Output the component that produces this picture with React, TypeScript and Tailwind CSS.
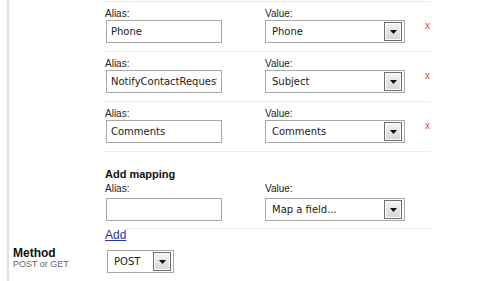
import type { ReactNode } from "react";

const FONT = "font-['Liberation_Sans',Arial,sans-serif]";
const FIELD_FONT = "font-['DejaVu_Sans',Verdana,sans-serif]";

const MAPPINGS = [
  { alias: "Phone", value: "Phone" },
  { alias: "NotifyContactRequest", value: "Subject" },
  { alias: "Comments", value: "Comments" },
];

function DropButton() {
  return (
    <div className="flex h-[19px] w-[18px] items-center justify-center border border-[#6e6e6e] bg-gradient-to-b from-[#f4f4f4] to-[#d6d6d6] shadow-[inset_0_0_0_1px_#fafafa]">
      <svg width="7" height="4" viewBox="0 0 7 4">
        <path d="M0 0h7L3.5 4z" fill="#111" />
      </svg>
    </div>
  );
}

function Select({ value, width }: { value: string; width: string }) {
  return (
    <div className={`flex h-[23px] items-center justify-between border border-[#a8a8a8] bg-white pl-[6px] pr-[2px] ${width}`}>
      <span className={`text-[10px] leading-none text-[#222] ${FIELD_FONT}`}>{value}</span>
      <DropButton />
    </div>
  );
}

function TextInput({ value }: { value: string }) {
  return (
    <input
      readOnly
      value={value}
      className={`ml-[1px] block h-[23px] w-[116px] border border-[#a8a8a8] bg-white px-[4px] text-[10px] text-[#222] outline-none ${FIELD_FONT}`}
    />
  );
}

function Label({ children }: { children: ReactNode }) {
  return <div className="h-[12px] text-[10px] leading-[12px] text-[#222]">{children}</div>;
}

function MappingRow({ alias, value }: { alias: string; value: string }) {
  return (
    <div className="flex border-t border-dotted border-[#d8d8d8] pb-[8px] pt-[6px]">
      <div className="w-[160px]">
        <Label>Alias:</Label>
        <TextInput value={alias} />
      </div>
      <div className="w-[160px]">
        <Label>Value:</Label>
        <Select value={value} width="w-[140px]" />
      </div>
      <div className="mt-[12px] text-[10px] leading-[12px] text-[#ee4035]">x</div>
    </div>
  );
}

export default function App() {
  return (
    <div className={`h-[281px] w-[499px] overflow-hidden bg-white ${FONT}`}>
      <div className="ml-[7px] h-full border-l-2 border-[#e2e2e2]">
        <div className="w-[421px] pl-[96px] pt-[1px]">
          {MAPPINGS.map((m) => (
            <MappingRow key={m.alias} alias={m.alias} value={m.value} />
          ))}
          <div className="border-t border-dotted border-[#d8d8d8] pt-[15px]">
            <div className="h-[14px] text-[11px] font-bold leading-[14px] text-[#111]">Add mapping</div>
            <div className="mt-[2px] flex pb-[6px]">
              <div className="w-[160px]">
                <Label>Alias:</Label>
                <div className="mt-[3px]">
                  <TextInput value="" />
                </div>
              </div>
              <div className="w-[160px]">
                <Label>Value:</Label>
                <div className="mt-[3px]">
                  <Select value="Map a field..." width="w-[140px]" />
                </div>
              </div>
            </div>
            <div className="flex items-start">
              <a href="#" className="mt-[1px] text-[12px] leading-[14px] text-[#23399c] underline">
                Add
              </a>
              <div className="ml-[1px] mt-[1px] flex-1 border-t border-dotted border-[#d8d8d8]" />
            </div>
          </div>
        </div>
        <div className="flex items-start">
          <div className="w-[98px] pl-[4px] pt-[5px]">
            <div className="text-[12px] font-bold leading-[12px] text-[#111]">Method</div>
            <div className="-mt-[2px] pt-[2px] text-[9px] leading-[10px] text-[#666]">POST or GET</div>
          </div>
          <div className="mt-[8px]">
            <Select value="POST" width="w-[67px]" />
          </div>
        </div>
      </div>
    </div>
  );
}
